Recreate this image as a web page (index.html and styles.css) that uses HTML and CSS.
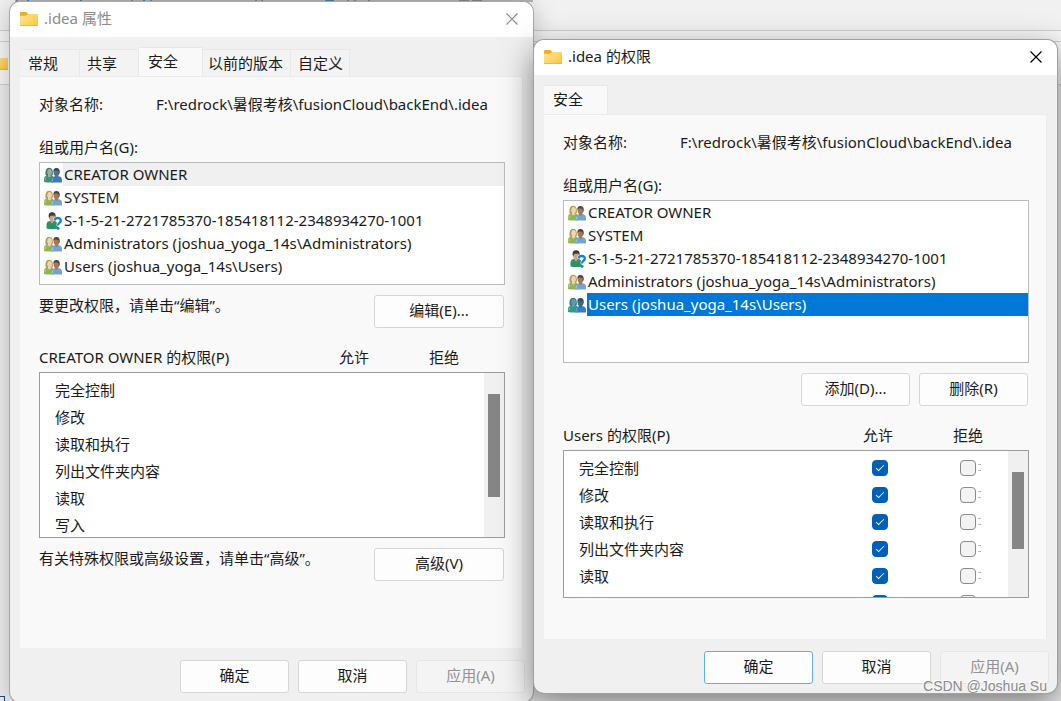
FILE: index.html
```html
<!DOCTYPE html>
<html lang="zh-CN">
<head>
    <meta charset="UTF-8">
    <meta name="viewport" content="width=device-width, initial-scale=1.0">
    <title>.idea 属性</title>
    <link rel="stylesheet" href="styles.css">
</head>
<body>
    <!-- Shared icons -->
    <svg class="symbols" aria-hidden="true">
        <defs>
            <linearGradient id="folder-fill" x1="0" y1="0" x2="1" y2="1">
                <stop offset="0" stop-color="#ffe59b"/>
                <stop offset="1" stop-color="#fdc638"/>
            </linearGradient>
        </defs>
        <symbol id="folder" viewBox="0 0 18 14">
            <path d="M0 1q0-1 1-1h5.300l2 2H17q1 0 1 1v3H0z" fill="#f2ae1c"/>
            <path d="M0 3.800h5.500L8 2h9q1 0 1 1V13q0 1-1 1H1q-1 0-1-1z" fill="url(#folder-fill)"/>
            <path d="M0 13.500h18" stroke="#e5ad35" stroke-width=".7"/>
        </symbol>
        <symbol id="group" viewBox="0 0 18 16">
            <path class="green" d="M0 15V12Q0 9 3 8.500L6 8l3 1 2 6q-5 1-11 0z"/>
            <path class="hair" d="M1.500 8Q.8 1 5 .8 9.500.6 8.800 8L7 9H3z"/>
            <ellipse class="face" cx="5.600" cy="5.200" rx="2.300" ry="3.100"/>
            <path class="face" d="M4 7.500h2.500l.5 2-1.500 1L4 9.500z"/>
            <path class="blue" d="M7.500 15.500V13Q7.500 10 10 9.500L12 9l3 .3q3 .7 3 3.700v2.500z"/>
            <ellipse class="tan" cx="12.500" cy="5.500" rx="2.900" ry="3.800"/>
            <path class="tan" d="M11 8h3v2l-1.500 1L11 10z"/>
            <path class="dark" d="M9.400 5Q9 1 12.500 1T15.700 5.500L15 7l-.5-3-3-.8-1.400 1z"/>
            <path d="M9 11.500q-1 1-.8 3M2 10.500q-1 1-1 3" stroke="#fff" stroke-opacity=".4" fill="none"/>
        </symbol>
        <symbol id="unknown-user" viewBox="0 0 18 18">
            <path d="M2.500 16.500V13q0-3.500 3-4l2-.5 3 .5q3 .5 3 4v3.500q-5 1-11 0z" fill="#2c9069"/>
            <ellipse cx="8" cy="5.200" rx="3" ry="4" fill="#cda57e"/>
            <path d="M6.500 8h3v2L8 11.500 6.500 10z" fill="#cda57e"/>
            <path d="M4.700 5Q4 .5 8 .3T11.700 5L11 6.500l-.5-3-4 .2L5.300 6z" fill="#3d3935"/>
            <path d="M10.800 8.500Q10.800 6 13.700 6T16.800 8.500q0 1.500-1.600 2.600-1.200.8-1.200 2.400" fill="none" stroke="#fff" stroke-width="3.400"/>
            <path d="M10.800 8.500Q10.800 6 13.700 6T16.800 8.500q0 1.500-1.600 2.600-1.200.8-1.200 2.400" fill="none" stroke="#167fda" stroke-width="2.300"/>
            <circle cx="14" cy="16.300" r="1.500" fill="#167fda"/>
        </symbol>
        <symbol id="close" viewBox="0 0 12 12">
            <path d="M.5.5l11 11M11.500.5l-11 11" fill="none" stroke="currentColor" stroke-width="1.200"/>
        </symbol>
    </svg>

    <!-- Explorer window behind the dialogs -->
    <div class="explorer" aria-hidden="true">
        <div class="explorer-toolbar">
            <svg class="toolbar-strip" width="540" height="2">
                <path d="M15 0h518v2H15z" fill="#b4b4b4"/>
                <path d="M17 0v2M132 0v2M151 0v2M256 0v2M262 0v2M348 0v2M355 0v2M369 0v2" stroke="#555"/>
                <path d="M28 0v2M81 0v2M144 0v2M325 1h9" stroke="#3784b5" stroke-width="2"/>
                <path d="M459 1h26" stroke="#555" stroke-dasharray="10 3"/>
            </svg>
        </div>
        <div class="explorer-gap"></div>
        <div class="explorer-address">
            <svg class="folder"><use href="#folder"/></svg>
        </div>
        <div class="explorer-content"><span></span></div>
    </div>

    <!-- Properties dialog -->
    <section class="window properties">
        <header class="titlebar">
            <svg class="folder"><use href="#folder"/></svg>
            <h1>.idea 属性</h1>
            <button class="close" aria-label="关闭"><svg><use href="#close"/></svg></button>
        </header>
        <nav class="tabs">
            <button>常规</button>
            <button>共享</button>
            <button class="active">安全</button>
            <button class="wide">以前的版本</button>
            <button>自定义</button>
        </nav>
        <div class="panel">
            <div class="object"><span>对象名称:</span><span>F:\redrock\暑假考核\fusionCloud\backEnd\.idea</span></div>
            <p class="list-label" id="groups-a">组或用户名(G):</p>
            <ul class="users" role="listbox" aria-labelledby="groups-a">
                <li class="current" role="option"><svg><use href="#group"/></svg><span>CREATOR OWNER</span></li>
                <li role="option"><svg><use href="#group"/></svg><span>SYSTEM</span></li>
                <li role="option"><svg><use href="#unknown-user"/></svg><span>S-1-5-21-2721785370-185418112-2348934270-1001</span></li>
                <li role="option"><svg><use href="#group"/></svg><span>Administrators (joshua_yoga_14s\Administrators)</span></li>
                <li role="option"><svg><use href="#group"/></svg><span>Users (joshua_yoga_14s\Users)</span></li>
            </ul>
            <div class="hint">
                <p>要更改权限，请单击“编辑”。</p>
                <button class="btn">编辑(E)...</button>
            </div>
            <div class="perm-head"><span>CREATOR OWNER 的权限(P)</span><span>允许</span><span>拒绝</span></div>
            <div class="permissions">
                <table>
                    <tr><td>完全控制</td></tr>
                    <tr><td>修改</td></tr>
                    <tr><td>读取和执行</td></tr>
                    <tr><td>列出文件夹内容</td></tr>
                    <tr><td>读取</td></tr>
                    <tr><td>写入</td></tr>
                </table>
                <div class="scrollbar"><div class="thumb"></div></div>
            </div>
            <div class="hint">
                <p>有关特殊权限或高级设置，请单击“高级”。</p>
                <button class="btn">高级(V)</button>
            </div>
        </div>
        <footer class="actions">
            <button class="btn">确定</button>
            <button class="btn">取消</button>
            <button class="btn" disabled>应用(A)</button>
        </footer>
    </section>

    <!-- Permissions dialog -->
    <section class="window security">
        <header class="titlebar">
            <svg class="folder"><use href="#folder"/></svg>
            <h1>.idea 的权限</h1>
            <button class="close" aria-label="关闭"><svg><use href="#close"/></svg></button>
        </header>
        <nav class="tabs">
            <button class="active">安全</button>
        </nav>
        <div class="panel">
            <div class="object"><span>对象名称:</span><span>F:\redrock\暑假考核\fusionCloud\backEnd\.idea</span></div>
            <p class="list-label" id="groups-b">组或用户名(G):</p>
            <ul class="users" role="listbox" aria-labelledby="groups-b">
                <li role="option"><svg><use href="#group"/></svg><span>CREATOR OWNER</span></li>
                <li role="option"><svg><use href="#group"/></svg><span>SYSTEM</span></li>
                <li role="option"><svg><use href="#unknown-user"/></svg><span>S-1-5-21-2721785370-185418112-2348934270-1001</span></li>
                <li role="option"><svg><use href="#group"/></svg><span>Administrators (joshua_yoga_14s\Administrators)</span></li>
                <li class="selected" role="option" aria-selected="true"><svg><use href="#group"/></svg><span>Users (joshua_yoga_14s\Users)</span></li>
            </ul>
            <div class="edit-buttons">
                <button class="btn">添加(D)...</button>
                <button class="btn">删除(R)</button>
            </div>
            <div class="perm-head"><span>Users 的权限(P)</span><span id="allow">允许</span><span id="deny">拒绝</span></div>
            <div class="permissions">
                <table>
                    <tr><td id="p1">完全控制</td><td><input type="checkbox" aria-labelledby="p1 allow" checked></td><td class="deny"><input type="checkbox" aria-labelledby="p1 deny"></td></tr>
                    <tr><td id="p2">修改</td><td><input type="checkbox" aria-labelledby="p2 allow" checked></td><td class="deny"><input type="checkbox" aria-labelledby="p2 deny"></td></tr>
                    <tr><td id="p3">读取和执行</td><td><input type="checkbox" aria-labelledby="p3 allow" checked></td><td class="deny"><input type="checkbox" aria-labelledby="p3 deny"></td></tr>
                    <tr><td id="p4">列出文件夹内容</td><td><input type="checkbox" aria-labelledby="p4 allow" checked></td><td class="deny"><input type="checkbox" aria-labelledby="p4 deny"></td></tr>
                    <tr><td id="p5">读取</td><td><input type="checkbox" aria-labelledby="p5 allow" checked></td><td class="deny"><input type="checkbox" aria-labelledby="p5 deny"></td></tr>
                    <tr><td id="p6">写入</td><td><input type="checkbox" aria-labelledby="p6 allow" checked></td><td class="deny"><input type="checkbox" aria-labelledby="p6 deny"></td></tr>
                </table>
                <div class="scrollbar"><div class="thumb"></div></div>
            </div>
        </div>
        <footer class="actions">
            <button class="btn primary">确定</button>
            <button class="btn">取消</button>
            <button class="btn" disabled>应用(A)</button>
        </footer>
    </section>

    <div class="watermark">CSDN @Joshua Su</div>
</body>
</html>
```
FILE: styles.css
```css
* {
    box-sizing: border-box;
}
body {
    margin: 0;
    height: 100vh;
    position: relative;
    overflow: hidden;
    background: #e6e6e6;
    color: #1a1a1a;
    font: 15px/20px "Noto Sans", "Noto Sans CJK SC", sans-serif;
}
h1, p, ul {
    margin: 0;
    padding: 0;
}
button {
    font: inherit;
    color: inherit;
    padding: 0;
    white-space: nowrap;
}
.symbols {
    position: absolute;
    width: 0;
    height: 0;
}

/* Explorer behind */
.explorer {
    height: 100%;
    display: flex;
    flex-direction: column;
}
.explorer-toolbar {
    height: 31px;
    background: #f1f1f1;
    border-bottom: 1px solid #cfcfcf;
}
.toolbar-strip {
    display: block;
}
.explorer-gap {
    height: 11px;
    background: #f6f6f6;
    border-bottom: 1px solid #cfcfcf;
}
.explorer-address {
    height: 43px;
    padding-top: 14px;
    background: #f6f6f6;
    border-bottom: 1px solid #cfcfcf;
}
.explorer-address .folder {
    margin-left: -10px;
}
.explorer-content {
    flex: 1;
    display: flex;
    align-items: flex-end;
    background: #ececec;
}
.explorer-content span {
    width: 5px;
    height: 5px;
    border: solid #1d4b80;
    border-width: 1px 1px 0 0;
}

/* Dialogs */
.window {
    position: absolute;
    width: 523px;
    background: #f0f0f0;
    border-radius: 10px;
    box-shadow: 0 0 0 1px #a8a8a8, 0 4px 24px rgba(0, 0, 0, 0.25);
}
.properties {
    left: 10px;
    top: 2px;
}
.security {
    left: 534px;
    top: 40px;
    box-shadow: 0 0 0 1px #a0a0a0, 0 10px 32px rgba(0, 0, 0, 0.5);
}
.titlebar {
    display: flex;
    align-items: center;
    height: 35px;
    padding: 0 15px 2px 10px;
    gap: 6px;
    background: #fff;
    border-radius: 10px 10px 0 0;
}
.folder {
    display: block;
    width: 18px;
    height: 14px;
}
.titlebar h1 {
    flex: 1;
    padding-bottom: 2px;
    font-size: 15px;
    font-weight: normal;
}
.properties h1,
.properties .close {
    color: #8c8c8c;
}
.close {
    display: flex;
    border: 0;
    background: none;
}
.close svg {
    width: 12px;
    height: 12px;
}
.security .close {
    color: #000;
}

/* Tabs */
.tabs {
    display: flex;
    align-items: flex-end;
    padding: 10px 11px 0;
}
.tabs button {
    width: 59px;
    height: 27px;
    padding-left: 7px;
    text-align: left;
    background: #f3f3f3;
    border: 1px solid #e8e8e8;
    border-left-width: 0;
    border-bottom: 0;
}
.tabs .wide {
    width: 88px;
    padding-left: 5px;
}
.tabs .active {
    width: 64px;
    height: 29px;
    padding: 0 0 3px 9px;
    background: #f9f9f9;
}
.security .tabs {
    padding: 10px 10px 0;
}
.panel {
    margin: 0 10px;
    padding: 17px 17px 0 19px;
    background: #f9f9f9;
    border: solid #ebebeb;
    border-width: 1px 1px 0 0;
}
.properties .panel {
    height: 572px;
}
.security .panel {
    height: 525px;
}
.object {
    display: flex;
    white-space: nowrap;
}
.object span:first-child {
    width: 117px;
}
.list-label {
    margin: 23px 0 5px;
}

/* User list */
.users {
    height: 123px;
    list-style: none;
    background: #fff;
    border: 1px solid #b9bbbf;
}
.security .users {
    height: 163px;
}
.users li {
    --green: #8fb653;
    --hair: #b29a58;
    --face: #f0d4b0;
    --blue: #74a4d3;
    --tan: #a57957;
    --dark: #454545;
    display: flex;
    align-items: center;
    height: 23px;
    padding-left: 4px;
    gap: 1px;
    white-space: nowrap;
}
.users li.current {
    --green: #438d72;
    --hair: #4a7366;
    --face: #99aca8;
    --blue: #377dbe;
    --tan: #596f82;
    --dark: #284766;
}
.users li.selected {
    --green: #2e9a8e;
    --hair: #397977;
    --face: #5e9da6;
    --blue: #327fc7;
    --tan: #3c678b;
    --dark: #1d4c75;
}
.users svg {
    width: 18px;
    height: 18px;
    flex: none;
}
.users span {
    flex: 1;
    padding-left: 1px;
    line-height: 23px;
}
.current span {
    background: #f0f0f0;
}
.selected span {
    color: #fff;
    background: #0078d7;
}
.green { fill: var(--green); }
.hair { fill: var(--hair); }
.face { fill: var(--face); }
.blue { fill: var(--blue); }
.tan { fill: var(--tan); }
.dark { fill: var(--dark); }

/* Buttons */
.btn {
    width: 109px;
    height: 33px;
    padding-bottom: 3px;
    background: #fdfdfd;
    border: 1px solid #d6d6d6;
    border-radius: 3px;
}
.btn.primary {
    border-color: #62aee8;
}
.btn:disabled {
    color: #929292;
    background: #f4f4f4;
    border-color: #e6e6e6;
}
.hint {
    display: flex;
    justify-content: space-between;
    padding: 10px 1px 0 0;
}
.hint .btn {
    width: 130px;
}
.edit-buttons {
    display: flex;
    justify-content: flex-end;
    gap: 9px;
    padding: 10px 1px 0 0;
}
.actions {
    display: flex;
    justify-content: flex-end;
    gap: 9px;
    padding: 12px 8px 9px;
}

/* Permissions */
.perm-head {
    display: grid;
    grid-template-columns: 1fr 90px 76px;
    margin: 19px 0 5px;
}
.permissions {
    display: flex;
    height: 166px;
    overflow: hidden;
    background: #fff;
    border: 1px solid #9b9b9b;
}
.security .permissions {
    height: 148px;
}
.permissions table {
    flex: 1;
    align-self: flex-start;
    margin-top: 3px;
    border-collapse: collapse;
    table-layout: fixed;
}
.permissions td {
    height: 27px;
    padding: 0 0 0 15px;
}
.permissions td + td {
    width: 88px;
    padding: 0;
}
.permissions td.deny {
    width: 48px;
}
.permissions input {
    appearance: none;
    display: block;
    width: 16px;
    height: 16px;
    margin: 0;
    background: #f3f3f3;
    border: 1px solid #8a8a8a;
    border-radius: 4px;
}
.permissions input:checked {
    display: flex;
    align-items: center;
    justify-content: center;
    background: #005fb8;
    border-color: #005fb8;
}
.permissions input:checked::before {
    content: "";
    width: 7px;
    height: 3px;
    margin-top: -2px;
    border: solid #e4effa;
    border-width: 0 0 1px 1px;
    transform: rotate(-45deg);
}
/* focus rectangle remainder right of the deny boxes */
.deny::after {
    content: "";
    display: block;
    width: 2px;
    height: 5px;
    margin: -12px 0 5px 18px;
    border: dotted #bbb;
    border-width: 1px 0;
}
.scrollbar {
    width: 20px;
    padding: 21px 4px 0;
    background: #f0f0f0;
}
.thumb {
    height: 103px;
    background: #858585;
}
.security .thumb {
    height: 77px;
}

.watermark {
    position: absolute;
    right: 14px;
    bottom: 5px;
    color: #8b8b8b;
    font: 14px/20px "Liberation Sans", sans-serif;
    text-shadow: -1px -1px 0 #fff;
}
```
